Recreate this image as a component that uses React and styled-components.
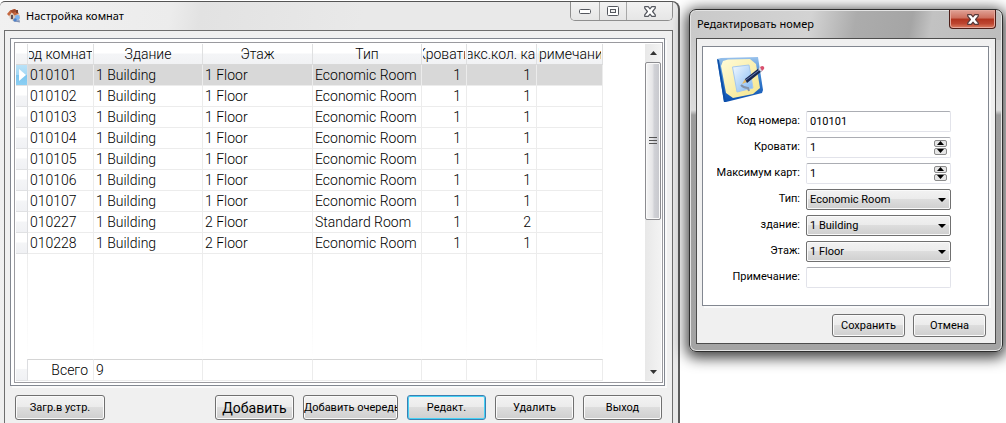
import React from "react";
import styled, { createGlobalStyle } from "styled-components";

const Global = createGlobalStyle`
  * { box-sizing: border-box; }
  body { margin: 0; background: #fff; color: #000; font-family: Roboto, "Liberation Sans", sans-serif; }
  button, input, select { font: inherit; color: inherit; margin: 0; }
`;

const Desktop = styled.div`
  display: flex;
  align-items: flex-start;
  gap: 9px;
  min-height: 100vh;
  padding-right: 3px;
  overflow: hidden;
`;

const MainWindow = styled.section`
  flex: 1;
  min-width: 0;
  min-height: 100vh;
  display: flex;
  flex-direction: column;
  margin-top: 1px;
  padding-right: 5px;
  padding-left: 4px;
  border-top: 1px solid #555;
  border-right: 2px solid #5c5c5c;
  border-radius: 5px 8px 0 0;
  background: linear-gradient(100deg, #f1f1f1 0, #ececec 170px, #e2e2e2 200px, #e9e9e9 360px, #e9e9e9 100%);
`;

const TitleBar = styled.header`
  display: flex;
  align-items: flex-start;
  height: 28px;
  padding-left: ${(p) => p.$inset}px;
`;

const Title = styled.h1`
  flex: 1;
  margin: 0;
  padding-left: ${(p) => p.$gap}px;
  font: 400 11px/28px "Noto Sans", "Open Sans", sans-serif;
  white-space: nowrap;
`;

const AppIcon = styled.svg`
  width: 14px;
  height: 14px;
  margin-top: 7px;
`;

const Caption = styled.div`
  display: flex;
  height: 19px;
  border: 1px solid #8f8f8f;
  border-top: 0;
  border-radius: 0 0 5px 5px;
  overflow: hidden;
`;

const CaptionButton = styled.button`
  display: grid;
  place-items: center;
  width: ${(p) => p.$width}px;
  padding: 0;
  border: 0;
  border-left: ${(p) => (p.$divided ? "1px solid #a8a8a8" : "0")};
  background: linear-gradient(#f2f2f2, #e6e6e6);
`;

const CloseButton = styled.button`
  display: grid;
  place-items: center;
  width: 47px;
  height: 19px;
  padding: 0;
  border: 1px solid #4c1e18;
  border-top: 0;
  border-radius: 0 0 4px 4px;
  box-shadow: inset 0 0 0 1px #e6a89c;
  background: linear-gradient(#e0a296 0, #cd6e5d 45%, #b1341f 50%, #bd4530 75%, #dc8063 100%);
`;

const Client = styled.div`
  flex: 1;
  padding: 7px 7px 8px 5px;
  border: 1px solid #6e6e6e;
  background: #f0f0f0;
`;

const Frame = styled.div`
  padding: 3px 1px 2px 3px;
  border: 1px solid #828790;
  background: #fff;
  box-shadow: 2px 2px 0 #fafafa;
`;

const GridBox = styled.div`
  display: flex;
  justify-content: space-between;
  padding: 1px;
  border: 1px solid #9a9a9f;
`;

const Table = styled.table`
  table-layout: fixed;
  width: 587px;
  border-collapse: separate;
  border-spacing: 0;
  font-size: 14px;
  font-weight: 300;
  line-height: 20px;
`;

const Head = styled.th`
  height: 21px;
  padding: 0 1px;
  border-right: 1px solid #dfe0e1;
  border-bottom: 1px solid #d9d9d9;
  background: linear-gradient(#fff 0, #fff 45%, #f4f5f7 50%, #f1f2f4 100%);
  font-weight: 300;
`;

const HeadText = styled.span`
  display: flex;
  justify-content: center;
  height: 20px;
  overflow: hidden;
  white-space: nowrap;
`;

const Cell = styled.td`
  height: 21px;
  padding: 0 ${(p) => (p.$right ? 5 : 2)}px;
  border-right: 1px solid #ececec;
  border-bottom: 1px solid #ececec;
  background: ${(p) => (p.$selected ? "#d8d8d8" : "#fff")};
  text-align: ${(p) => (p.$right ? "right" : "left")};
  white-space: nowrap;
`;

const Marker = styled.td`
  padding: 0 0 0 3px;
  border-right: 1px solid #dcdde0;
  border-bottom: 1px solid #e0e1e3;
  background: ${(p) =>
    p.$selected
      ? "linear-gradient(#b9e2f8 0, #a4d8f5 48%, #7cc6f0 52%, #8ccff3 100%)"
      : "linear-gradient(#fff 0, #fff 45%, #f4f5f7 50%, #f0f1f4 100%)"};
  line-height: 0;
`;

const Filler = styled.td`
  height: 105px;
  padding: 0;
  background: linear-gradient(#ececec, #fff) right / 1px 100% no-repeat;
`;

const Total = styled(Cell)`
  height: 22px;
  border-top: 1px solid #d5d5d5;
`;

const ScrollBar = styled.div`
  display: flex;
  flex-direction: column;
  width: 16px;
  background: linear-gradient(90deg, #e8e8e8, #f3f3f3);
`;

const ScrollButton = styled.button`
  display: grid;
  place-items: center;
  height: 18px;
  padding: 0;
  border: 0;
  background: transparent;
`;

const Thumb = styled.div`
  display: grid;
  place-items: center;
  height: 158px;
  border: 1px solid #8c8c90;
  border-radius: 2px;
  box-shadow: inset 0 0 0 1px #fafafa;
  background: linear-gradient(90deg, #f5f5f5 0, #e6e6e8 45%, #d0d1d6 60%, #c6c7cc 100%);
`;

const Spacer = styled.div`
  flex: 1;
`;

const Actions = styled.div`
  display: flex;
  justify-content: flex-end;
  gap: ${(p) => p.$gap}px;
  padding: ${(p) => p.$pad};
`;

const PushButton = styled.button`
  display: flex;
  align-items: center;
  justify-content: ${(p) => (p.$fromStart ? "flex-start" : "center")};
  flex: none;
  width: ${(p) => p.$width}px;
  height: ${(p) => p.$height || 25}px;
  padding: 0;
  overflow: hidden;
  border: 1px solid ${(p) => (p.$active ? "#3c7fb1" : "#707070")};
  border-radius: 3px;
  box-shadow: inset 0 0 0 1px ${(p) => (p.$active ? "#46d1f5" : "#fbfbfb")};
  background: linear-gradient(#f3f3f3 0, #ebebeb 49%, #dddddd 50%, #cfcfcf 100%);
  font-size: ${(p) => (p.$large ? 14 : 11)}px;
  white-space: nowrap;
`;

const Dialog = styled.section`
  flex: none;
  width: 314px;
  margin-top: 9px;
  padding: 0 6px 7px;
  border: 1px solid #2e2e2e;
  border-radius: 7px;
  box-shadow: inset 0 0 0 1px #e4e4e4, 0 3px 14px 3px rgba(0, 0, 0, 0.75);
  background:
    linear-gradient(100deg, #c9c9c9 0, #d3d3d3 120px, #acacac 165px, #a5a5a5 220px, #c2c2c2 240px, #bdbdbd 100%) top / 100% 30px no-repeat,
    linear-gradient(#c2c2c2 0, #dcdcdc 100px, #9c9c9c 105px, #a4a4a4 100%);
`;

const DialogClient = styled.div`
  padding: 7px 6px 6px 5px;
  border: 1px solid #4d4d4d;
  background: #f0f0f0;
`;

const FormPanel = styled.form`
  padding: 10px 37px 17px 14px;
  border: 1px solid #828790;
  background: #fff;
  box-shadow: 2px 2px 0 #fafafa;
  font-size: 11px;
`;

const NoteIcon = styled.svg`
  display: block;
  width: 50px;
  height: 48px;
`;

const Fields = styled.div`
  display: grid;
  gap: 4px;
  margin-top: 5px;
`;

const Field = styled.div`
  display: flex;
  align-items: center;
  justify-content: flex-end;
  gap: 6px;
  height: 22px;
`;

const Label = styled.label`
  display: flex;
  justify-content: flex-end;
  width: 83px;
  overflow: hidden;
  white-space: nowrap;
  line-height: 20px;
`;

const Control = styled.div`
  position: relative;
  width: 145px;
  height: 21px;
`;

const TextInput = styled.input`
  display: block;
  width: 100%;
  height: 100%;
  padding: 0 3px;
  border: 1px solid #e2e3ea;
  border-top-color: #abadb3;
  border-radius: 2px;
  background: #fff;
`;

const Spinner = styled.div`
  position: absolute;
  top: 3px;
  right: 4px;
  display: grid;
  gap: 1px;
`;

const SpinButton = styled.button`
  display: grid;
  place-items: center;
  width: 13px;
  height: 7px;
  padding: 0;
  border: 1px solid #8a8a8a;
  border-radius: 2px;
  background: #e6e6e6;
`;

const Select = styled.select`
  appearance: none;
  display: block;
  width: 100%;
  height: 100%;
  padding: 0 3px;
  border: 1px solid #707070;
  border-radius: 2px;
  box-shadow: inset 0 0 0 1px #fafafa;
  background: linear-gradient(#f2f2f2 0, #ebebeb 49%, #dddddd 50%, #cfcfcf 100%);
`;

const DropArrow = styled.svg`
  position: absolute;
  top: 9px;
  right: 5px;
  pointer-events: none;
`;

const columns = [
  ["Код комнаты", 66],
  ["Здание", 109],
  ["Этаж", 110],
  ["Тип", 109],
  ["Кровати", 45],
  ["Макс.кол. карт", 70],
  ["Примечание", 66],
];

const rows = [
  ["010101", "1 Building", "1 Floor", "Economic Room", 1, 1],
  ["010102", "1 Building", "1 Floor", "Economic Room", 1, 1],
  ["010103", "1 Building", "1 Floor", "Economic Room", 1, 1],
  ["010104", "1 Building", "1 Floor", "Economic Room", 1, 1],
  ["010105", "1 Building", "1 Floor", "Economic Room", 1, 1],
  ["010106", "1 Building", "1 Floor", "Economic Room", 1, 1],
  ["010107", "1 Building", "1 Floor", "Economic Room", 1, 1],
  ["010227", "1 Building", "2 Floor", "Standard Room", 1, 2],
  ["010228", "1 Building", "2 Floor", "Economic Room", 1, 1],
];

const Triangle = ({ width = 7, height = 4, down, color = "#333" }) => (
  <svg width={width} height={height} viewBox="0 0 8 4" preserveAspectRatio="none" aria-hidden="true">
    <path d={down ? "M0 0H8L4 4Z" : "M0 4H8L4 0Z"} fill={color} />
  </svg>
);

const Cross = ({ stroke }) => (
  <svg width="12" height="11" viewBox="0 0 12 11" aria-hidden="true">
    <path
      d="M.7.7H4.2L6 2.9L7.8.7H11.3V2.2L8.6 5.5L11.3 8.8V10.3H7.8L6 8.1L4.2 10.3H.7V8.8L3.4 5.5L.7 2.2Z"
      fill="#fff"
      stroke={stroke}
      strokeWidth="1.2"
      strokeLinejoin="round"
    />
  </svg>
);

function HouseIcon() {
  return (
    <AppIcon viewBox="0 0 14 14" aria-hidden="true">
      <path d="M2 6L8 3L13 6V10L8 13L3 10Z" fill="#d9c8b8" />
      <path d="M8 6L12 6V11L8 13Z" fill="#a8b9d6" />
      <path d="M0 5L3 1.5L8 0L12 4.5L7.5 6.5L5 3.5L2 7Z" fill="#c4673f" />
      <path d="M3 1.5L8 0L10 2.5L5.5 4Z" fill="#a04a2c" />
      <rect x="9" y="1" width="2" height="3" fill="#76402f" />
      <rect x="4" y="6" width="2" height="4" fill="#5f4f55" />
      <circle cx="10.5" cy="8.5" r="2.3" fill="#7db4ef" />
      <circle cx="8" cy="11" r="1.8" fill="#4c82cc" />
      <path d="M7 12.5L13 13.5L12.5 11Z" fill="#8093b7" />
    </AppIcon>
  );
}

function EditNoteIcon() {
  return (
    <NoteIcon viewBox="0 0 50 48" aria-hidden="true">
      <defs>
        <linearGradient id="cover" x1="0" y1="0" x2="0" y2="1">
          <stop offset="0" stopColor="#9bc3ec" />
          <stop offset=".4" stopColor="#3f86d3" />
          <stop offset="1" stopColor="#0b4fb0" />
        </linearGradient>
        <linearGradient id="leaf" x1="0" y1="0" x2="1" y2="1">
          <stop offset="0" stopColor="#fffbd8" />
          <stop offset="1" stopColor="#f6e58a" />
        </linearGradient>
        <linearGradient id="sheet" x1="0" y1="0" x2="1" y2="1">
          <stop offset="0" stopColor="#f4faff" />
          <stop offset="1" stopColor="#7db6f4" />
        </linearGradient>
      </defs>
      <path d="M0 2L4 1L41 0L46 33L45 36L9 45L7 45Z" fill="url(#cover)" />
      <path d="M0 2L2 3L9 45L7 45Z" fill="#0d4fa8" />
      <path d="M6 4L11 2.5L33 2L39 7L43 31L36 37L16 41L9 36L4 9Z" fill="url(#leaf)" />
      <path d="M15.5 10L32 8L36 31L20 35Z" fill="url(#sheet)" stroke="#a5c8ee" />
      <path d="M24 28Q27 31 31 31L32 34" fill="none" stroke="#8493a8" strokeWidth="2" />
      <path d="M25 27L28 22L30 25Z" fill="#e2b866" />
      <path d="M28 22L42 11L45 14L30 26Z" fill="#172750" />
      <path d="M29 23L43 12.5" stroke="#6b80b5" strokeWidth="1" />
      <path d="M41 12L43 10L46 13L44 15Z" fill="#d5d8e4" />
      <path d="M43 10L45 9Q48 9 47 12L45 14Z" fill="#d9506d" />
    </NoteIcon>
  );
}

function NumberField({ id, label }) {
  return (
    <Field>
      <Label htmlFor={id}>{label}</Label>
      <Control>
        <TextInput id={id} inputMode="numeric" defaultValue="1" />
        <Spinner>
          <SpinButton type="button" aria-label="Увеличить"><Triangle color="#000" /></SpinButton>
          <SpinButton type="button" aria-label="Уменьшить"><Triangle down color="#000" /></SpinButton>
        </Spinner>
      </Control>
    </Field>
  );
}

function TextField({ id, label, value }) {
  return (
    <Field>
      <Label htmlFor={id}>{label}</Label>
      <Control><TextInput id={id} defaultValue={value} /></Control>
    </Field>
  );
}

function SelectField({ id, label, options }) {
  return (
    <Field>
      <Label htmlFor={id}>{label}</Label>
      <Control>
        <Select id={id}>
          {options.map((o) => <option key={o}>{o}</option>)}
        </Select>
        <DropArrow width="8" height="4" viewBox="0 0 8 4" aria-hidden="true"><path d="M0 0H8L4 4Z" /></DropArrow>
      </Control>
    </Field>
  );
}

function RoomTable() {
  return (
    <Table>
      <colgroup>
        <col style={{ width: 12 }} />
        {columns.map(([name, width]) => <col key={name} style={{ width }} />)}
      </colgroup>
      <thead>
        <tr>
          <Head />
          {columns.map(([name]) => <Head key={name}><HeadText>{name}</HeadText></Head>)}
        </tr>
      </thead>
      <tbody>
        {rows.map((row, i) => (
          <tr key={row[0]}>
            <Marker $selected={i === 0}>
              {i === 0 && (
                <svg width="7" height="12" viewBox="0 0 7 12" aria-hidden="true"><path d="M0 0L7 6L0 12Z" fill="#fff" /></svg>
              )}
            </Marker>
            {row.map((value, c) => <Cell key={c} $right={c > 3} $selected={i === 0}>{value}</Cell>)}
            <Cell $selected={i === 0} />
          </tr>
        ))}
        <tr>
          <Filler />
          {columns.map(([name]) => <Filler key={name} />)}
        </tr>
      </tbody>
      <tfoot>
        <tr>
          <Marker />
          <Total $right>Всего</Total>
          <Total>{rows.length}</Total>
          <Total /><Total /><Total /><Total /><Total />
        </tr>
      </tfoot>
    </Table>
  );
}

export default function App() {
  return (
    <>
      <Global />
      <Desktop>
        <MainWindow>
          <TitleBar $inset={3}>
            <HouseIcon />
            <Title $gap={5}>Настройка комнат</Title>
            <Caption>
              <CaptionButton $width={28} aria-label="Свернуть">
                <svg width="12" height="5" viewBox="0 0 12 5"><rect x=".5" y=".5" width="11" height="4" rx="1" fill="#fff" stroke="#55585f" /></svg>
              </CaptionButton>
              <CaptionButton $width={27} $divided aria-label="Развернуть">
                <svg width="12" height="10" viewBox="0 0 12 10"><rect x=".5" y=".5" width="11" height="9" rx="1" fill="#fff" stroke="#55585f" /><rect x="3.5" y="3.5" width="5" height="3" fill="#eee" stroke="#55585f" /></svg>
              </CaptionButton>
              <CaptionButton $width={46} $divided aria-label="Закрыть"><Cross stroke="#55585f" /></CaptionButton>
            </Caption>
          </TitleBar>
          <Client>
            <Frame>
              <GridBox>
                <RoomTable />
                <ScrollBar>
                  <ScrollButton aria-label="Вверх"><Triangle /></ScrollButton>
                  <Thumb>
                    <svg width="8" height="8" viewBox="0 0 8 8" aria-hidden="true"><path d="M0 .5H8M0 3.5H8M0 6.5H8" stroke="#555" /></svg>
                  </Thumb>
                  <Spacer />
                  <ScrollButton aria-label="Вниз"><Triangle down /></ScrollButton>
                </ScrollBar>
              </GridBox>
            </Frame>
            <Actions $gap={9} $pad="9px 3px 0 5px">
              <PushButton $width={90}>Загр.в устр.</PushButton>
              <Spacer />
              <PushButton $width={79} $large>Добавить</PushButton>
              <PushButton $width={95} $fromStart>Добавить очередью</PushButton>
              <PushButton $width={79} $active>Редакт.</PushButton>
              <PushButton $width={79}>Удалить</PushButton>
              <PushButton $width={79}>Выход</PushButton>
            </Actions>
          </Client>
        </MainWindow>

        <Dialog>
          <TitleBar $inset={0}>
            <Title $gap={1}>Редактировать номер</Title>
            <CloseButton aria-label="Закрыть"><Cross stroke="#5a3a3a" /></CloseButton>
          </TitleBar>
          <DialogClient>
            <FormPanel id="room-form">
              <EditNoteIcon />
              <Fields>
                <TextField id="code" label="Код номера:" value="010101" />
                <NumberField id="beds" label="Кровати:" />
                <NumberField id="cards" label="Максимум карт:" />
                <SelectField id="type" label="Тип:" options={["Economic Room", "Standard Room"]} />
                <SelectField id="building" label="здание:" options={["1 Building"]} />
                <SelectField id="floor" label="Этаж:" options={["1 Floor", "2 Floor"]} />
                <TextField id="note" label="Примечание:" value="" />
              </Fields>
            </FormPanel>
            <Actions $gap={8} $pad="8px 3px 0">
              <PushButton form="room-form" $width={73} $height={23}>Сохранить</PushButton>
              <PushButton type="button" $width={73} $height={23}>Отмена</PushButton>
            </Actions>
          </DialogClient>
        </Dialog>
      </Desktop>
    </>
  );
}
